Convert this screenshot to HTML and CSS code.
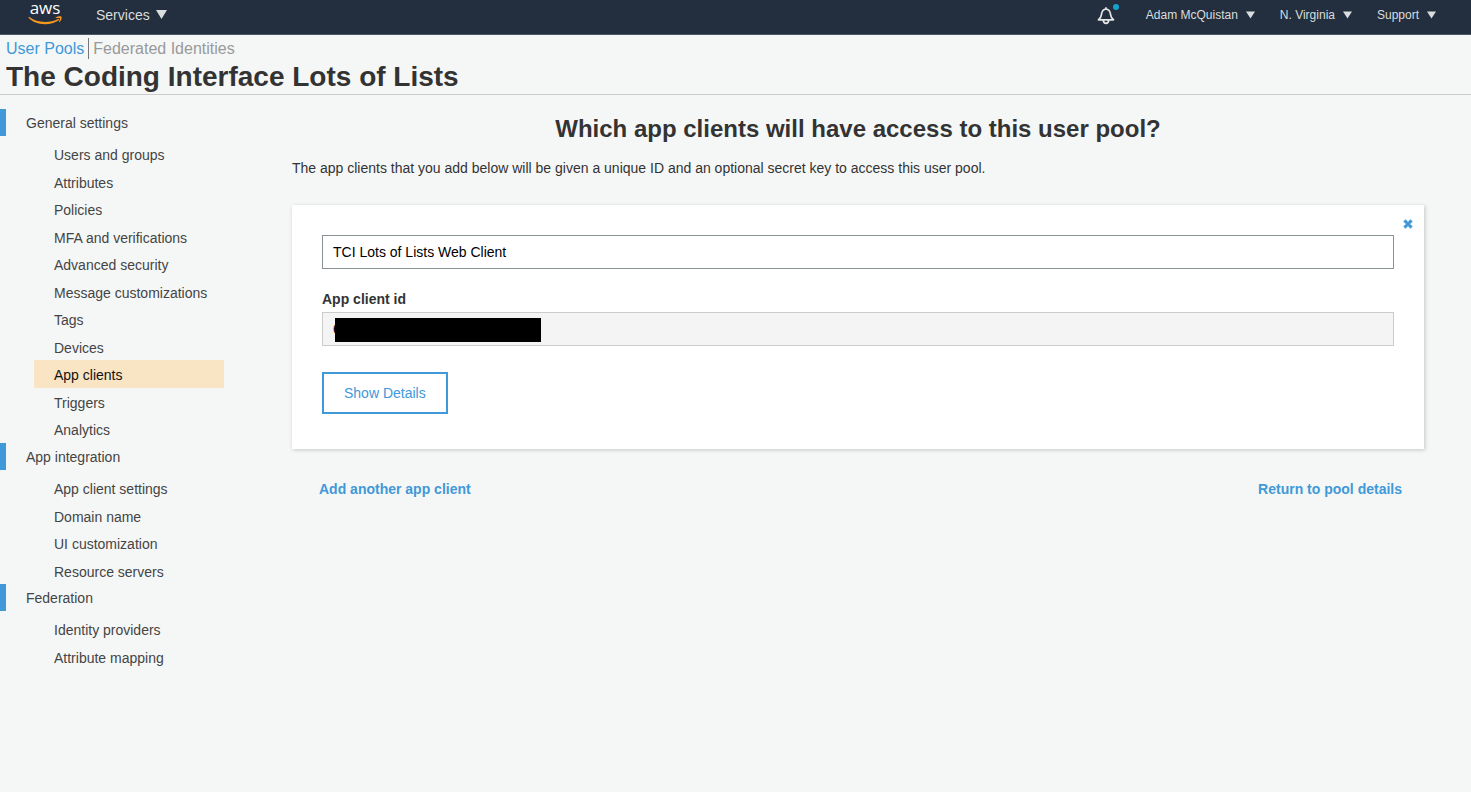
FILE: index.html
```html
<!DOCTYPE html>
<html lang="en">
<head>
<meta charset="utf-8">
<meta name="viewport" content="width=device-width, initial-scale=1">
<title>User Pools</title>
<link rel="stylesheet" href="styles.css">
</head>
<body>
<header class="topbar">
  <a class="logo" href="#" aria-label="aws">
    <svg class="logo-art" viewBox="0 0 36 28" aria-hidden="true">
      <text class="logo-word" x="18" y="14" text-anchor="middle">aws</text>
      <path class="logo-smile" d="M2 16.800C10 23.300 23 23.300 31.500 18.700L32.400 19.900C23 26 9 25.700 1.400 17.700Z"/>
      <path class="logo-smile" d="M28.500 17.500C31 16.200 34 16 34.500 16.800C35 18 34.200 20.800 32.300 22.300L31.900 22C32.600 20.300 33.300 18.800 32.900 18.200C32.400 17.700 30.400 18 28.700 18.100Z"/>
    </svg>
  </a>
  <button class="menu menu-main" type="button">Services
    <svg class="caret caret-main" viewBox="0 0 10 8" preserveAspectRatio="none" aria-hidden="true"><path d="M0 0H10L5 8Z"/></svg>
  </button>
  <nav class="account" aria-label="Account">
    <button class="bell" type="button" aria-label="Notifications">
      <svg class="bell-art" viewBox="0 0 22 22" aria-hidden="true">
        <path class="bell-line" d="M1.500 15.800C4.500 13.800 4.100 12 4.600 9.600C5.100 6.900 6.600 5.300 9 5C11.400 5.300 12.900 6.900 13.400 9.600C13.900 12 13.500 13.800 16.500 15.800ZM9 5V3.200M6.300 16C6.300 20.400 11.700 20.400 11.700 16"/>
        <circle class="bell-dot" cx="19" cy="3" r="3"/>
      </svg>
    </button>
    <button class="menu" type="button">Adam McQuistan
      <svg class="caret" viewBox="0 0 10 8" aria-hidden="true"><path d="M0 0H10L5 8Z"/></svg>
    </button>
    <button class="menu" type="button">N. Virginia
      <svg class="caret" viewBox="0 0 10 8" aria-hidden="true"><path d="M0 0H10L5 8Z"/></svg>
    </button>
    <button class="menu" type="button">Support
      <svg class="caret" viewBox="0 0 10 8" aria-hidden="true"><path d="M0 0H10L5 8Z"/></svg>
    </button>
  </nav>
</header>

<div class="pool-header">
  <nav class="crumbs" aria-label="Pools">
    <a class="crumb crumb-current" href="#">User Pools</a>
    <a class="crumb" href="#">Federated Identities</a>
  </nav>
  <h1 class="pool-name">The Coding Interface Lots of Lists</h1>
</div>

<div class="layout">
  <nav class="sidebar" aria-label="Settings">
    <a class="group" href="#">General settings</a>
    <ul class="items">
      <li class="item"><a href="#">Users and groups</a></li>
      <li class="item"><a href="#">Attributes</a></li>
      <li class="item"><a href="#">Policies</a></li>
      <li class="item"><a href="#">MFA and verifications</a></li>
      <li class="item"><a href="#">Advanced security</a></li>
      <li class="item"><a href="#">Message customizations</a></li>
      <li class="item"><a href="#">Tags</a></li>
      <li class="item"><a href="#">Devices</a></li>
      <li class="item item-active"><a href="#" aria-current="page">App clients</a></li>
      <li class="item"><a href="#">Triggers</a></li>
      <li class="item"><a href="#">Analytics</a></li>
    </ul>
    <a class="group" href="#">App integration</a>
    <ul class="items">
      <li class="item"><a href="#">App client settings</a></li>
      <li class="item"><a href="#">Domain name</a></li>
      <li class="item"><a href="#">UI customization</a></li>
      <li class="item"><a href="#">Resource servers</a></li>
    </ul>
    <a class="group" href="#">Federation</a>
    <ul class="items">
      <li class="item"><a href="#">Identity providers</a></li>
      <li class="item"><a href="#">Attribute mapping</a></li>
    </ul>
  </nav>

  <main class="content">
    <h2 class="question">Which app clients will have access to this user pool?</h2>
    <p class="intro">The app clients that you add below will be given a unique ID and an optional secret key to access this user pool.</p>
    <section class="card">
      <button class="remove" type="button" aria-label="Remove app client">
        <svg class="remove-art" viewBox="0 0 10 10" aria-hidden="true"><path d="M1.400 1.400L8.600 8.600M8.600 1.400L1.400 8.600"/></svg>
      </button>
      <input class="field" type="text" aria-label="App client name" value="TCI Lots of Lists Web Client">
      <label class="label" for="client-id">App client id</label>
      <div class="masked">
        <input class="field field-readonly" id="client-id" type="text" value="6" readonly>
        <span class="mask"></span>
      </div>
      <button class="details" type="button">Show Details</button>
    </section>
    <div class="actions">
      <a class="action" href="#">Add another app client</a>
      <a class="action" href="#">Return to pool details</a>
    </div>
  </main>
</div>
</body>
</html>
```
FILE: styles.css
```css
* {
  box-sizing: border-box;
}

body {
  margin: 0;
  background: #f5f7f7;
  color: #333;
  font: 14px/20px "Helvetica Neue", "Liberation Sans", Arial, sans-serif;
}

a {
  color: inherit;
  text-decoration: none;
}

button,
input {
  font: inherit;
}

button {
  padding: 0;
  border: 0;
  background: none;
  cursor: pointer;
}

.topbar {
  display: flex;
  align-items: center;
  height: 35px;
  padding: 0 35px 5px 27px;
  background: #232f3e;
  border-bottom: 1px solid #4b5563;
}

.logo {
  align-self: flex-start;
}

.logo-art {
  display: block;
  width: 36px;
  height: 28px;
  overflow: visible;
}

.logo-word {
  fill: #fff;
  font: 500 17px "Open Sans", "Noto Sans", sans-serif;
}

.logo-smile {
  fill: #f7981f;
}

.menu {
  display: flex;
  align-items: center;
  gap: 8px;
  color: #d9dddd;
  font-size: 12px;
  white-space: nowrap;
}

.menu-main {
  gap: 6px;
  margin-left: 33px;
  font-size: 14px;
}

.caret {
  width: 9px;
  height: 8px;
  fill: #d9dddd;
}

.caret-main {
  width: 11px;
  height: 9px;
}

.account {
  display: flex;
  align-items: center;
  gap: 25px;
  margin-left: auto;
}

.bell {
  margin-right: 2px;
}

.bell-art {
  display: block;
  width: 22px;
  height: 22px;
}

.bell-line {
  fill: none;
  stroke: #e3e6e6;
  stroke-width: 1.7;
  stroke-linejoin: round;
}

.bell-dot {
  fill: #16a2cf;
}

.pool-header {
  padding: 3px 6px 0;
  border-bottom: 1px solid #ccc;
}

.crumbs {
  display: flex;
  gap: 4px;
  font-size: 16px;
}

.crumb {
  color: #999;
  line-height: 21px;
}

.crumb-current {
  padding-right: 4px;
  border-right: 1px solid #777;
  color: #4099d8;
}

.pool-name {
  margin: 0;
  font-size: 28px;
  line-height: 35px;
}

.layout {
  display: flex;
  padding-top: 14px;
}

.sidebar {
  flex: none;
  width: 224px;
  color: #444;
}

.group {
  display: block;
  height: 27px;
  padding-left: 20px;
  border-left: 6px solid #4099d8;
  line-height: 29px;
}

.items {
  margin: 0;
  padding: 4px 0 0 34px;
  list-style: none;
}

.item {
  height: 27px;
  padding-left: 20px;
  line-height: 30px;
}

.item:nth-child(odd) {
  height: 28px;
}

.item-active {
  background: #f9e4c4;
  color: #111;
}

.content {
  flex: 1;
  padding: 5px 47px 0 68px;
}

.question {
  margin: 0 0 14px;
  font-size: 24px;
  line-height: 30px;
  text-align: center;
}

.intro {
  margin: 0 0 27px;
}

.card {
  position: relative;
  padding: 30px 30px 35px;
  background: #fff;
  box-shadow: 1px 1px 4px rgba(0, 0, 0, 0.2);
}

.remove {
  position: absolute;
  top: 14px;
  right: 11px;
}

.remove-art {
  display: block;
  width: 10px;
  height: 10px;
  fill: none;
  stroke: #4099d8;
  stroke-width: 3;
}

.field {
  display: block;
  width: 100%;
  height: 34px;
  padding: 0 10px;
  border: 1px solid #8a9295;
  border-radius: 0;
  background: #fff;
  color: #000;
}

.field-readonly {
  border-color: #ccc;
  background: #f4f4f4;
}

.label {
  display: block;
  margin: 20px 0 3px;
  font-weight: bold;
}

.masked {
  position: relative;
}

.mask {
  position: absolute;
  top: 6px;
  left: 13px;
  width: 206px;
  height: 24px;
  background: #000;
}

.details {
  height: 42px;
  margin-top: 26px;
  padding: 0 20px;
  border: 2px solid #4099d8;
  color: #4099d8;
}

.actions {
  display: flex;
  justify-content: space-between;
  padding: 30px 22px 0 27px;
}

.action {
  color: #4099d8;
  font-weight: bold;
}
```
